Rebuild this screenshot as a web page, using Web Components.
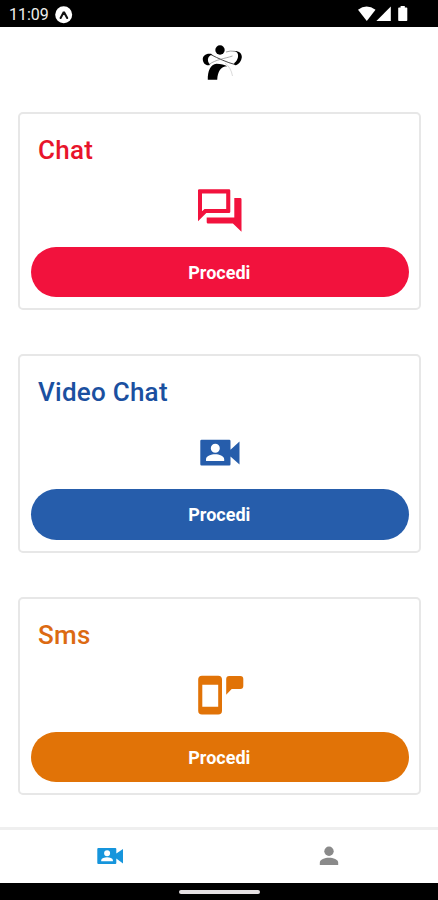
<!DOCTYPE html>
<html lang="it">
<head>
<meta charset="utf-8">
<title>Chat</title>
<style>
html,body{margin:0;height:100%;background:#fff}
body{font-family:Roboto,"Liberation Sans",sans-serif;overflow:hidden}
</style>
</head>
<body>
<chat-app></chat-app>
<script>
const define = (name, html) => customElements.define(name, class extends HTMLElement {
  constructor() {
    super();
    const t = document.createElement('template');
    t.innerHTML = html;
    this.attachShadow({mode: 'open'}).append(t.content.cloneNode(true));
  }
});

define('status-bar', `
<style>
:host{display:flex;justify-content:space-between;height:26.5px;background:#000;color:#eee}
.left{display:flex;align-items:center;padding:3px 0 0 9px;gap:6px;font-size:16px;line-height:23px}
.left span{width:40px;white-space:nowrap}
svg{display:block}
</style>
<div class="left"><span>11:09</span>
<svg width="18" height="18" viewBox="0 0 18 18"><circle cx="8.7" cy="8.8" r="8.5" fill="#fff"/><path d="M5.6 12 8.5 6.6h.7L12.2 12" fill="none" stroke="#111" stroke-width="2.1" stroke-linecap="round"/></svg></div>
<svg width="84" height="26" viewBox="354 0 84 26"><g fill="#fff"><path d="M358 9.8Q366.5 3 375.5 9.8L366.8 21Z"/><path d="M390.8 6.6V21H376.4Z"/><path d="M398.2 8.2q0-.8.8-.8h1.6V6h4.2v1.4h1.7q.8 0 .8.8V20.200q0 .8-.8.8H399q-.8 0-.8-.8Z"/></g></svg>`);

define('brand-mark', `
<style>:host{display:flex;justify-content:center;height:85px}svg{display:block}</style>
<svg width="64" height="85" viewBox="187 26.500 64 85">
<circle cx="220" cy="49.500" r="4.700" fill="#000"/>
<path d="M207.800 79.300C207.500 70.500 210.500 63.800 216.500 63.200C221 63.200 224.500 64.200 227.200 65.800C220.500 66 217.800 71 217.200 79.300Z"/>
<path d="M212.500 53.700C206.500 52.200 202.600 55 202.800 59C203 63.200 206.600 66 210.300 64.300C208.200 62.500 207.300 59.500 208.300 57.200C209 55.500 210.500 54.700 212.500 53.700Z"/>
<path d="M232.500 50.500C238.500 49.800 242.300 52.500 241.800 57C241.300 60.800 239.200 63.400 236 64.800C234.200 65 233.500 63.400 234.600 62.300C238 59.700 239 54.500 237.200 52.200C236.300 51 234.800 50.700 232.500 50.500Z"/>
<g fill="none" stroke="#333" stroke-width=".9"><path d="M211 54.200C218 57.800 227 62 235 64"/><path d="M209 64C216 58.800 225.500 58 232.500 55.500" stroke="#888" stroke-width=".7"/><path d="M226 51.500Q230 50 235 50.800" stroke="#999"/><path d="M225 62.500Q231 67 232.500 75.500" stroke="#ccc" stroke-width=".7"/></g>
</svg>`);

define('action-button', `
<style>
:host{display:block}
button{display:block;width:100%;height:50.500px;border:0;padding:2px 1px 0 0;border-radius:26px;background:var(--fill);color:#fff;font:700 18px/24px Roboto,"Liberation Sans",sans-serif}
</style>
<button><slot></slot></button>`);

define('service-card', `
<style>
:host{display:flex;flex-direction:column;box-sizing:border-box;height:198.500px;border:2px solid #e7e7e7;border-radius:5px;background:#fff;padding:0 10px 0 11px}
h2{margin:19px 0 0 7px;font-weight:500;font-size:26px;line-height:34px;letter-spacing:.25px;color:var(--ink)}
.icon{display:flex;justify-content:center;height:56px;margin-top:13px;color:var(--fill)}
::slotted(svg){display:block}
action-button{margin-top:11px}
</style>
<h2><slot name="title"></slot></h2>
<div class="icon"><slot name="icon"></slot></div>
<action-button><slot></slot></action-button>`);

define('tab-bar', `
<style>
:host{display:grid;grid-template-columns:1fr 1fr;box-sizing:border-box;height:55.500px;border-top:3px solid #efefef;background:#fff}
div{display:flex;justify-content:center;align-items:center}
svg{display:block}
</style>
<div><svg width="28" height="20" viewBox="0 0 28 20"><path fill="#1695dc" fill-rule="evenodd" d="M2.300 2H19.300q1 0 1 1V7.500L27 3V17.500L20.300 12.500V17q0 1-1 1H2.300q-1 0-1-1V3q0-1 1-1ZM11.100 4.300a3 3 0 1 0 0 6 3 3 0 0 0 0-6ZM5.200 15.300H16.900V14C16.600 12.200 13.800 11.300 11.100 11.300S5.600 12.200 5.200 14Z"/></svg></div>
<div><svg width="20" height="22" viewBox="0 0 20 22"><g fill="#8a8a8a"><circle cx="10" cy="6.300" r="4.700"/><path d="M.8 20V17.700C.8 14.600 5.800 12.800 10 12.800S19.200 14.600 19.200 17.700V20Z"/></g></svg></div>`);

define('gesture-bar', `
<style>:host{display:flex;justify-content:center;height:17.500px;background:#000}i{display:block;width:81px;height:4px;border-radius:2px;background:#e5e1e3;margin-top:7.500px}</style><i></i>`);

define('chat-app', `
<style>
:host{display:flex;flex-direction:column;height:900px;width:438px;background:#fff}
main{flex:1;min-height:0;display:flex;flex-direction:column;gap:44px;padding:0 17.500px 0 18px}
.red{--fill:#f2123d;--ink:#e8142b}
.blue{--fill:#265dab;--ink:#1b50a0}
.orange{--fill:#e17307;--ink:#dc6a12}
</style>
<status-bar></status-bar>
<brand-mark></brand-mark>
<main>
<service-card class="red"><span slot="title">Chat</span>
<svg slot="icon" width="78" height="56" viewBox="181 179.500 78 56" fill="currentColor"><path fill-rule="evenodd" d="M199.200 188.800H229q1.300 0 1.300 1.300V211.200q0 1.300-1.300 1.300H206.300L198 220.700V190q0-1.200 1.200-1.200ZM202 193V210.800L204.500 208.500H226.200V193Z"/><path d="M234.300 197.500H240.200q1.300 0 1.300 1.300V231.300L232.900 223H208q-1.300 0-1.300-1.300V217H234.300Z"/></svg>Procedi</service-card>
<service-card class="blue"><span slot="title">Video Chat</span>
<svg slot="icon" width="78" height="56" viewBox="181 422 78 56" fill="currentColor"><path fill-rule="evenodd" d="M201.500 439.700H229.300q1.200 0 1.200 1.200V449.700L239.500 441.500V464.500L230.500 456.500V464.200q0 1.200-1.200 1.200H201.500q-1.200 0-1.200-1.200V440.900q0-1.200 1.200-1.200ZM215.300 443.800a4.500 4.500 0 1 0 0 9 4.500 4.500 0 0 0 0-9ZM206 461H224.200V459.200C224 456 219.300 454.200 215.200 454.200S206.200 456 206 459.200Z"/></svg>Procedi</service-card>
<service-card class="orange"><span slot="title">Sms</span>
<svg slot="icon" width="78" height="56" viewBox="181 664.500 78 56" fill="currentColor"><path fill-rule="evenodd" d="M202 675.300H218.200q3.800 0 3.800 3.800V710.200q0 3.800-3.800 3.800H202q-3.800 0-3.800-3.800V679.100q0-3.800 3.800-3.800ZM202.300 684.300V706.200H218.200V684.300Z"/><path d="M229.200 675.500H240.300q3 0 3 3V685.500q0 3-3 3H231.700L226.200 694.300V678.500q0-3 3-3Z"/></svg>Procedi</service-card>
</main>
<tab-bar></tab-bar>
<gesture-bar></gesture-bar>`);
</script>
</body>
</html>
